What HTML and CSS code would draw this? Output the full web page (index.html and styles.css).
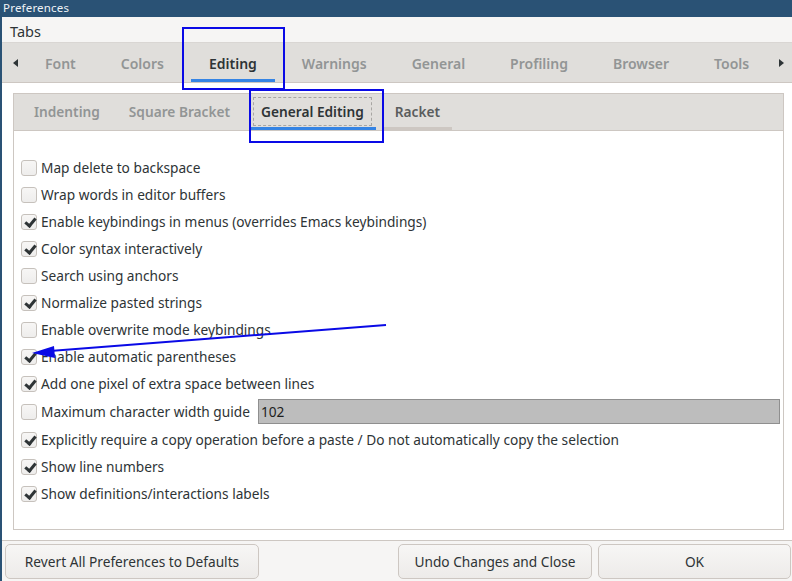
FILE: index.html
```html
<!DOCTYPE html>
<html>
<head>
<meta charset="utf-8">
<link rel="stylesheet" href="styles.css">
</head>
<body>
<div class="win">
  <div class="titlebar">Preferences</div>
  <div class="client">
    <div class="menubar"><span class="menu">Tabs</span></div>
    <div class="outer-nb">
      <div class="tabbar">
        <span class="arrow arrow-left"></span>
        <div class="tabs">
          <span class="tab">Font</span>
          <span class="tab">Colors</span>
          <span class="tab tab-sel">Editing</span>
          <span class="tab">Warnings</span>
          <span class="tab">General</span>
          <span class="tab">Profiling</span>
          <span class="tab">Browser</span>
          <span class="tab">Tools</span>
        </div>
        <span class="arrow arrow-right"></span>
      </div>
      <div class="page">
        <div class="inner-nb">
          <div class="itabbar">
            <span class="itab">Indenting</span>
            <span class="itab">Square Bracket</span>
            <span class="itab itab-sel"><span class="focus">General Editing</span></span>
            <span class="itab itab-last">Racket</span>
          </div>
          <div class="ipanel">
            <label class="row"><span class="cb"></span>Map delete to backspace</label>
            <label class="row"><span class="cb"></span>Wrap words in editor buffers</label>
            <label class="row"><span class="cb on"></span>Enable keybindings in menus (overrides Emacs keybindings)</label>
            <label class="row"><span class="cb on"></span>Color syntax interactively</label>
            <label class="row"><span class="cb"></span>Search using anchors</label>
            <label class="row"><span class="cb on"></span>Normalize pasted strings</label>
            <label class="row"><span class="cb"></span>Enable overwrite mode keybindings</label>
            <label class="row"><span class="cb on"></span>Enable automatic parentheses</label>
            <label class="row"><span class="cb on"></span>Add one pixel of extra space between lines</label>
            <label class="row row-field"><span class="cb"></span>Maximum character width guide<span class="field">102</span></label>
            <label class="row"><span class="cb on"></span>Explicitly require a copy operation before a paste / Do not automatically copy the selection</label>
            <label class="row"><span class="cb on"></span>Show line numbers</label>
            <label class="row"><span class="cb on"></span>Show definitions/interactions labels</label>
          </div>
        </div>
      </div>
    </div>
    <div class="buttons">
      <button class="btn btn-revert">Revert All Preferences to Defaults</button>
      <button class="btn btn-undo">Undo Changes and Close</button>
      <button class="btn btn-ok">OK</button>
    </div>
  </div>
  <div class="annot-box box-1"></div>
  <div class="annot-box box-2"></div>
  <svg class="annot-arrow" width="792" height="581" viewBox="0 0 792 581">
    <line x1="386" y1="325" x2="50" y2="351" stroke="#0a0ae6" stroke-width="2"/>
    <polygon points="32,353 54,346 55,358" fill="#0a0ae6"/>
  </svg>
</div>
</body>
</html>
```
FILE: styles.css
```css
* { box-sizing: border-box; }
html, body { margin: 0; padding: 0; }
body {
  width: 792px;
  height: 581px;
  overflow: hidden;
  font-family: "Noto Sans", "DejaVu Sans", sans-serif;
  color: #2e3436;
  background: #2a5275;
}
.win {
  position: relative;
  width: 792px;
  height: 581px;
  display: flex;
  flex-direction: column;
  padding-left: 2px;
  background: #2a5275;
}
.titlebar {
  height: 17px;
  line-height: 16px;
  font-size: 11.5px;
  color: #eef2f6;
  padding-left: 1px;
  letter-spacing: 0.2px;
}
.client {
  flex: 1;
  display: flex;
  flex-direction: column;
  background: #f6f5f4;
}
.menubar {
  height: 26px;
  display: flex;
  align-items: center;
  padding-left: 8px;
  padding-top: 2px;
  font-size: 14.5px;
  border-bottom: 1px solid #d9d6d3;
}
.outer-nb {
  display: flex;
  flex-direction: column;
}
.tabbar {
  height: 40px;
  background: #e0dedb;
  border-bottom: 1px solid #cdc7c2;
  display: flex;
  align-items: stretch;
}
.arrow {
  width: 0; height: 0;
  align-self: center;
  border-top: 4.5px solid transparent;
  border-bottom: 4.5px solid transparent;
}
.arrow-left {
  border-right: 5px solid #2e3436;
  margin-left: 11px;
  margin-right: 9px;
}
.arrow-right {
  border-left: 5px solid #2e3436;
  margin-left: auto;
  margin-right: 8px;
}
.tabs {
  display: flex;
  gap: 9px;
}
.tab {
  display: flex;
  align-items: center;
  padding: 4px 18px 0;
  font-size: 14px;
  font-weight: 600;
  color: #929595;
  border-bottom: 3px solid transparent;
}
.tab-sel {
  color: #2e3436;
  border-bottom-color: #3584e4;
}
.page {
  background: #ffffff;
  padding: 10px 8px 10px 11px;
  height: 458px;
  border-bottom: 1px solid #cdc7c2;
}
.inner-nb {
  border: 1px solid #cdc7c2;
  height: 100%;
  display: flex;
  flex-direction: column;
}
.itabbar {
  height: 37px;
  background: #e0dedb;
  border-bottom: 1px solid #cdc7c2;
  display: flex;
  gap: 7px;
  padding-left: 8px;
}
.itab {
  display: flex;
  align-items: center;
  padding: 1px 12px 0;
  font-size: 13.7px;
  font-weight: 600;
  color: #929595;
  border-bottom: 3px solid transparent;
}
.itab:first-child { padding-right: 10px; }
.itab-sel {
  color: #2e3436;
  border-bottom-color: #3584e4;
  padding: 1px 4px 0;
}
.focus {
  border: 1px dashed #a8a6a3;
  padding: 4px 7px;
}
.itab-last {
  color: #5a5d5d;
  border-bottom-color: #cdc7c2;
}
.ipanel {
  flex: 1;
  background: #fff;
  padding: 23px 0 0 7px;
  display: flex;
  flex-direction: column;
}
.row {
  height: 27px;
  display: flex;
  align-items: center;
  font-size: 13.7px;
  color: #2e3436;
  white-space: nowrap;
}
.row-field {
  height: 29px;
  padding-right: 3px;
}
.cb {
  width: 16px;
  height: 16px;
  border: 1px solid #c6c1bc;
  border-radius: 3px;
  background: linear-gradient(#f7f6f5, #eeedec);
  margin-right: 4px;
  position: relative;
  flex: none;
}
.cb.on::after {
  content: "";
  position: absolute;
  left: 4.5px;
  top: 1px;
  width: 4px;
  height: 8px;
  border-right: 3px solid #2e3436;
  border-bottom: 3px solid #2e3436;
  transform: rotate(40deg);
}
.field {
  margin-left: 8px;
  flex: 1;
  height: 25px;
  background: #bdbdbd;
  border: 1px solid #8f8f8f;
  display: flex;
  align-items: center;
  padding-left: 2px;
  color: #1e1e1e;
}
.buttons {
  flex: 1;
  display: flex;
  align-items: flex-start;
  padding: 3px 1px 0 3px;
  gap: 6px;
}
.btn {
  height: 35px;
  border: 1px solid #cdc7c2;
  border-radius: 5px;
  background: linear-gradient(#f7f6f5, #edebe9);
  font-family: "Noto Sans", "DejaVu Sans", sans-serif;
  font-size: 13.7px;
  color: #2e3436;
  padding: 0;
}
.btn-revert { width: 254px; margin-right: auto; }
.btn-undo { width: 194px; }
.btn-ok { width: 193px; }
.annot-box {
  position: absolute;
  border: 2px solid #0a0ae6;
}
.box-1 { left: 182px; top: 27px; width: 103px; height: 63px; }
.box-2 { left: 249px; top: 89px; width: 135px; height: 54px; }
.annot-arrow {
  position: absolute;
  left: 0;
  top: 0;
  pointer-events: none;
}
```
